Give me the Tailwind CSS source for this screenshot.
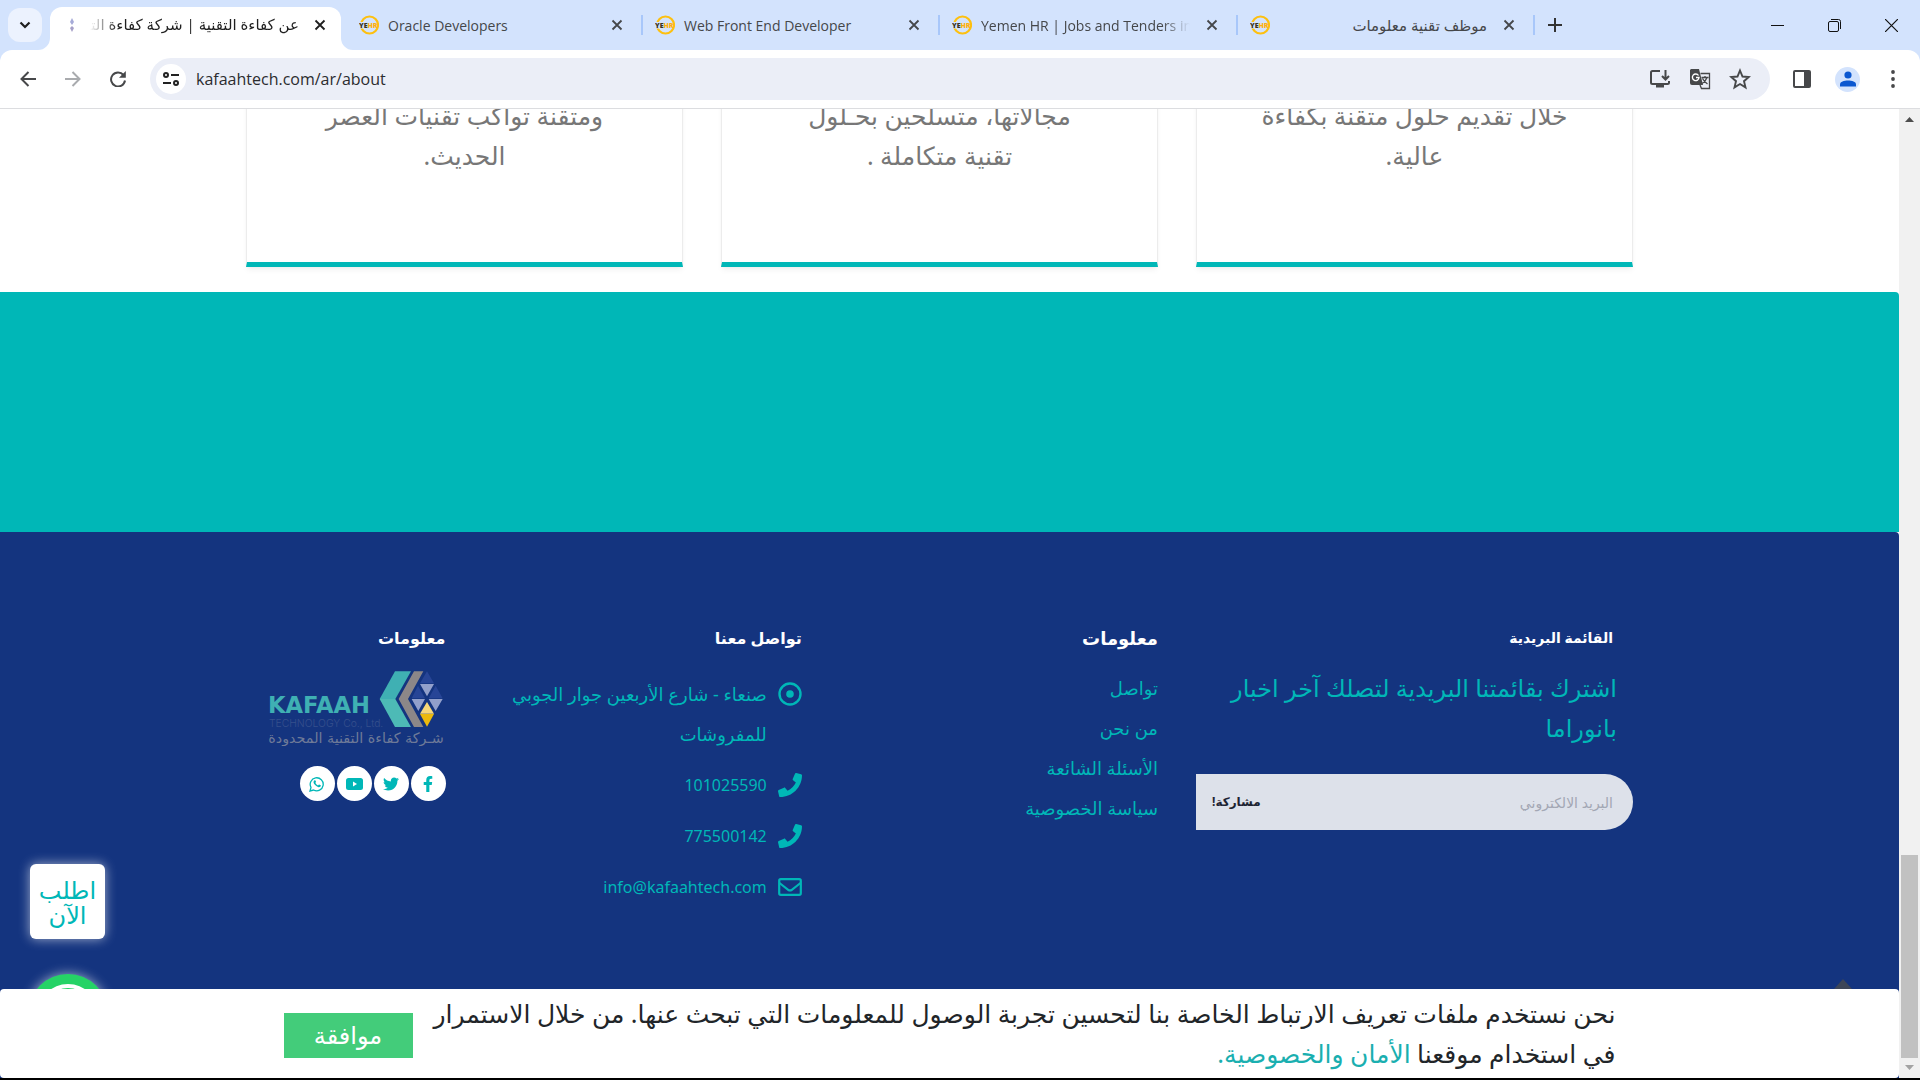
<!DOCTYPE html>
<html lang="ar">
<head>
<meta charset="utf-8">
<title>عن كفاءة التقنية | شركة كفاءة التقنية</title>
<script src="https://cdn.jsdelivr.net/npm/@tailwindcss/browser@4"></script>
</head>
<body class="flex h-screen flex-col overflow-hidden bg-black pb-0.5 font-['Open_Sans','DejaVu_Sans',sans-serif]">
<svg class="hidden">
  <symbol id="x" viewBox="0 0 12 12"><path d="M1.500 1.500l9 9M10.500 1.500l-9 9" stroke="currentColor" stroke-width="1.800" fill="none"/></symbol>
  <symbol id="yehr" viewBox="0 0 20 20"><circle cx="10.500" cy="10" r="8.500" fill="none" stroke="#fdc010" stroke-width="2.200"/><rect x="0" y="7" width="9" height="6.500" fill="#d3e3fd"/><text x="0" y="12.800" font-family="Open Sans" font-weight="800" font-size="7" fill="#3a3320">YE<tspan fill="#fdb010">HR</tspan></text></symbol>
  <symbol id="phone" viewBox="0 0 512 512"><path fill="currentColor" d="M493.400 24.600l-104-24c-11.300-2.600-22.900 3.300-27.500 13.900l-48 112c-4.200 9.800-1.400 21.300 6.900 28l60.600 49.600c-36 76.700-98.900 140.500-177.200 177.200l-49.600-60.600c-6.800-8.300-18.200-11.100-28-6.900l-112 48C3.900 366.500-2 378.100.600 389.400l24 104C27.100 504.200 36.700 512 48 512c256.100 0 464-207.500 464-464 0-11.200-7.700-20.900-18.600-23.400z"/></symbol>
</svg>

<!-- tab strip -->
<header class="shrink-0 bg-[#d3e3fd]" dir="ltr">
  <div class="flex h-[50px] items-center text-[14px] text-[#45474a]">
    <button class="ml-2 flex size-[34px] items-center justify-center rounded-xl bg-[#ecf2fe]" aria-label="Search tabs"><svg class="size-3" viewBox="0 0 12 12"><path d="M1.500 3.500L6 8l4.500-4.500" fill="none" stroke="#1f1f1f" stroke-width="2.200"/></svg></button>
    <div class="relative ml-2 flex h-[43px] w-[291px] items-center self-end rounded-t-xl bg-white pb-2 text-[#1f1f1f]">
      <svg class="absolute bottom-0 -left-3 size-3" viewBox="0 0 12 12"><path d="M12 0v12H0A12 12 0 0 0 12 0z" fill="#fff"/></svg>
      <svg class="absolute -right-3 bottom-0 size-3" viewBox="0 0 12 12"><path d="M0 0v12h12A12 12 0 0 1 0 0z" fill="#fff"/></svg>
      <svg class="ml-4 h-4 w-3 shrink-0" viewBox="0 0 12 16"><path d="M6 1l2 4-2 3-2-3z" fill="#a6abd8"/><path d="M6 9l2 2-2 4-2-4z" fill="#a6a0c8"/></svg>
      <span class="ml-3 flex-1 overflow-hidden whitespace-nowrap text-[15px] [mask-image:linear-gradient(to_right,transparent,black_28px)]" dir="rtl">عن كفاءة التقنية | شركة كفاءة التقنية</span>
      <button class="mx-[15px]" aria-label="Close"><svg class="size-3"><use href="#x"/></svg></button>
    </div>
    <div class="ml-1 flex w-[298px] items-center pl-3.5"><svg class="size-5"><use href="#yehr"/></svg><span class="ml-[9px] flex-1 whitespace-nowrap">Oracle Developers</span><button class="mr-[18px]" aria-label="Close"><svg class="size-3"><use href="#x"/></svg></button><i class="h-5 w-0.5 bg-[#a8c7fa]"></i></div>
    <div class="flex w-[297px] items-center pl-3"><svg class="size-5"><use href="#yehr"/></svg><span class="ml-[9px] flex-1 whitespace-nowrap">Web Front End Developer</span><button class="mr-[18px]" aria-label="Close"><svg class="size-3"><use href="#x"/></svg></button><i class="h-5 w-0.5 bg-[#a8c7fa]"></i></div>
    <div class="flex w-[298px] items-center pl-3"><svg class="size-5"><use href="#yehr"/></svg><span class="mr-4 ml-[9px] flex-1 overflow-hidden whitespace-nowrap [mask-image:linear-gradient(to_left,transparent,black_28px)]">Yemen HR | Jobs and Tenders in Yemen</span><button class="mr-[18px]" aria-label="Close"><svg class="size-3"><use href="#x"/></svg></button><i class="h-5 w-0.5 bg-[#a8c7fa]"></i></div>
    <div class="flex w-[297px] items-center pl-3"><svg class="size-5"><use href="#yehr"/></svg><span class="mr-4 ml-[9px] flex-1 whitespace-nowrap text-[15px]" dir="rtl">موظف تقنية معلومات</span><button class="mr-[18px]" aria-label="Close"><svg class="size-3"><use href="#x"/></svg></button><i class="h-5 w-0.5 bg-[#a8c7fa]"></i></div>
    <button class="ml-[13px]" aria-label="New tab"><svg class="size-3.5" viewBox="0 0 14 14"><path d="M7 0v14M0 7h14" stroke="#333" stroke-width="2"/></svg></button>
    <div class="mr-[22px] ml-auto flex gap-11 text-[#111]">
      <button aria-label="Minimize"><svg class="size-[13px]" viewBox="0 0 13 13"><path d="M0 6.500h13" stroke="currentColor"/></svg></button>
      <button aria-label="Restore"><svg class="size-[13px]" viewBox="0 0 13 13"><g fill="none" stroke="currentColor"><rect x=".5" y="2.500" width="10" height="10" rx="1.500"/><path d="M3 .5h7.500a2 2 0 0 1 2 2V10"/></g></svg></button>
      <button aria-label="Close window"><svg class="size-[13px]" viewBox="0 0 13 13"><path d="M0 0l13 13M13 0L0 13" stroke="currentColor" stroke-width="1.200"/></svg></button>
    </div>
  </div>
  <!-- toolbar -->
  <div class="flex h-[59px] items-center rounded-t-xl border-b border-[#dcdde0] bg-white text-[#47484a]">
    <button class="ml-5" aria-label="Back"><svg class="size-4" viewBox="0 0 16 16"><path d="M16 8H1.500M8.500 1L1.500 8l7 7" fill="none" stroke="currentColor" stroke-width="2"/></svg></button>
    <button class="ml-[29px] text-[#a9abae]" aria-label="Forward"><svg class="size-4" viewBox="0 0 16 16"><path d="M0 8h14.500M7.500 1l7 7-7 7" fill="none" stroke="currentColor" stroke-width="2"/></svg></button>
    <button class="ml-[29px]" aria-label="Reload"><svg class="size-4" viewBox="0 0 16 16"><path d="M13.500 4A7 7 0 1 0 15 9.500" fill="none" stroke="currentColor" stroke-width="2"/><path d="M15.800 0v6.800H9z" fill="currentColor"/></svg></button>
    <div class="ml-6 flex h-[42px] flex-1 items-center rounded-full bg-[#ebeef7] pr-[19px] pl-1.5">
      <button class="flex size-[30px] items-center justify-center rounded-full bg-white" aria-label="Site information"><svg class="size-4" viewBox="0 0 16 16"><g fill="none" stroke="#222" stroke-width="2"><circle cx="3" cy="4" r="2"/><path d="M8 4h8M0 12h8"/><circle cx="13" cy="12" r="2"/></g></svg></button>
      <input class="ml-2.5 min-w-0 flex-1 bg-transparent text-[16px] text-[#2b2c2f] outline-none" aria-label="Address" value="kafaahtech.com/ar/about">
      <div class="flex items-center gap-[18px]">
        <button aria-label="Install"><svg class="size-[22px]" viewBox="0 0 22 22"><path d="M11 3H3.500A1.500 1.500 0 0 0 2 4.500v10A1.500 1.500 0 0 0 3.500 16h15a1.500 1.500 0 0 0 1.500-1.500V13M16.500 2v9M13 8l3.500 3.500L20 8" fill="none" stroke="currentColor" stroke-width="2"/><path d="M7 16h8v3.500H7z" fill="currentColor"/></svg></button>
        <button aria-label="Translate"><svg class="size-[22px]" viewBox="0 0 22 22"><path d="M2 1h8l4 16H3a2 2 0 0 1-2-2V2z" fill="currentColor"/><path d="M9.500 7.500A3.300 3.300 0 1 0 10 9.500H7" fill="none" stroke="#fff" stroke-width="1.400"/><path d="M11.500 5.500h9v15h-8l-1.500-3.500M12.500 9.500h7M16 8v1.500M18 9.500c-1 3-3 5-5 6M13.500 10.500c1 2 3 4 5 5.500" fill="none" stroke="currentColor" stroke-width="1.300"/></svg></button>
        <button aria-label="Bookmark"><svg class="size-[22px]" viewBox="0 0 22 22"><path d="M11 2.500l2.500 6 6.300.5-4.800 4.200 1.500 6.200L11 16l-5.500 3.400L7 13.200 2.200 9l6.300-.5z" fill="none" stroke="currentColor" stroke-width="1.900"/></svg></button>
      </div>
    </div>
    <button class="ml-[22px]" aria-label="Side panel"><svg class="size-5" viewBox="0 0 20 20"><rect x="2" y="2" width="16" height="16" rx="1" fill="none" stroke="currentColor" stroke-width="2"/><path d="M12 2h6v16h-6z" fill="currentColor"/></svg></button>
    <button class="ml-[23px] flex size-[25px] items-center justify-center rounded-full bg-[#d3e3fd]" aria-label="Profile"><svg class="size-4" viewBox="0 0 16 16"><circle cx="8" cy="4" r="3.600" fill="#0b57d0"/><path d="M0 15.500v-2C0 10.500 4 9.500 8 9.500s8 1 8 4v2z" fill="#0b57d0"/></svg></button>
    <button class="mr-[17px] ml-[23px]" aria-label="Menu"><svg class="size-5" viewBox="0 0 20 20"><g fill="currentColor"><circle cx="10" cy="3" r="1.900"/><circle cx="10" cy="10" r="1.900"/><circle cx="10" cy="17" r="1.900"/></g></svg></button>
  </div>
</header>

<div class="flex min-h-0 flex-1 bg-white" dir="ltr">
  <div class="relative flex min-w-0 flex-1 flex-col overflow-hidden font-['Noto_Sans','DejaVu_Sans',sans-serif]" dir="rtl">
    <!-- cards, scrolled partly out of view -->
    <main class="shrink-0 pr-5">
      <div class="mx-auto -mt-3.5 grid max-w-[1387px] grid-cols-3 gap-[38px] text-center text-[25px] leading-10 text-[#777]">
        <article class="h-[172px] border-x border-b-[5px] border-x-[#ececec] border-b-[#00b7b7] shadow-md shadow-black/5"><p><span class="block">خلال تقديم حلول متقنة بكفاءة</span><span class="block">عالية.</span></p></article>
        <article class="h-[172px] border-x border-b-[5px] border-x-[#ececec] border-b-[#00b7b7] shadow-md shadow-black/5"><p><span class="block">مجالاتها، متسلحين بحـلول</span><span class="block">تقنية متكاملة .</span></p></article>
        <article class="h-[172px] border-x border-b-[5px] border-x-[#ececec] border-b-[#00b7b7] shadow-md shadow-black/5"><p><span class="block">ومتقنة تواكب تقنيات العصر</span><span class="block">الحديث.</span></p></article>
      </div>
    </main>
    <section class="mt-[25px] h-60 shrink-0 rounded-tr bg-[#00b7b7]"></section>

    <footer class="flex-1 rounded-tr bg-[#14347f] pt-[88px] pr-5 text-[#00b7b7]">
      <div class="mx-auto grid max-w-[1387px] grid-cols-12 gap-x-[38px]">
        <section class="col-span-4">
          <h3 class="pr-5 text-[14px] leading-9 font-bold text-white">القائمة البريدية</h3>
          <p class="mt-3 pr-4 text-[24px] leading-10 whitespace-nowrap"><span class="block">اشترك بقائمتنا البريدية لتصلك آخر اخبار</span><span class="block">بانوراما</span></p>
          <form class="mt-[26px] flex h-14 items-center rounded-r-full bg-[#dde1ea] pr-5 pl-4">
            <input type="email" class="min-w-0 flex-1 bg-transparent text-[14px] outline-none placeholder:text-[#a3a7b4]" aria-label="البريد الالكتروني" placeholder="البريد الالكتروني">
            <button type="button" class="text-[12px] font-bold text-[#1d2433]">مشاركة!</button>
          </form>
        </section>
        <nav class="col-span-3">
          <h3 class="text-[18px] leading-9 font-bold text-white">معلومات</h3>
          <ul class="mt-3 text-[18px] leading-10">
            <li><a href="#">تواصل</a></li><li><a href="#">من نحن</a></li><li><a href="#">الأسئلة الشائعة</a></li><li><a href="#">سياسة الخصوصية</a></li>
          </ul>
        </nav>
        <section class="col-span-3">
          <h3 class="text-[16px] leading-9 font-bold text-white">تواصل معنا</h3>
          <ul class="mt-[18px] flex flex-col gap-[11px] text-[16px] leading-10 whitespace-nowrap">
            <li class="flex gap-[11px]"><svg class="mt-2 size-6 shrink-0" viewBox="0 0 24 24"><circle cx="12" cy="12" r="10.500" fill="none" stroke="currentColor" stroke-width="2.400"/><circle cx="12" cy="12" r="3.800" fill="currentColor"/></svg><span class="text-[18px]"><span class="block">صنعاء - شارع الأربعين جوار الجوبي</span><span class="block">للمفروشات</span></span></li>
            <li class="flex gap-[11px]"><svg class="mt-2 size-6 shrink-0"><use href="#phone"/></svg><a href="#">101025590</a></li>
            <li class="flex gap-[11px]"><svg class="mt-2 size-6 shrink-0"><use href="#phone"/></svg><a href="#">775500142</a></li>
            <li class="flex gap-[11px]"><svg class="mt-2 size-6 shrink-0" viewBox="0 0 24 24"><rect x="1.200" y="4.200" width="21.600" height="15.600" rx="1.500" fill="none" stroke="currentColor" stroke-width="2.200"/><path d="M1.500 8l9 7q1.500 1 3 0l9-7" fill="none" stroke="currentColor" stroke-width="2.200"/></svg><a href="#">info@kafaahtech.com</a></li>
          </ul>
        </section>
        <section class="col-span-2">
          <h3 class="text-[16px] leading-9 font-bold text-white">معلومات</h3>
          <svg class="mt-3.5 mr-0.5 h-[76px] w-[176px]" viewBox="82 180 528 228" direction="ltr">
            <path d="M463 184h48l-47 83h-47z" fill="#3fb0b3"/><path d="M417 267h47l47 84h-48z" fill="#4dbab6"/>
            <path d="M520 184h28l-46 83 46 84h-28l-46-84z" fill="#8c8788"/>
            <path d="M559 184l21 36h-42zM532 227l21 38h-40zM585 227l21 38h-42z" fill="#274596"/>
            <path d="M538 222h42l-21 37zM513 267h40l-20 36zM564 267h42l-21 36z" fill="#92a0cb"/>
            <path d="M559 276l21 35h-42z" fill="#f6d778"/><path d="M538 312h42l-21 38z" fill="#ebb90c"/>
            <text x="82" y="310" font-family="DejaVu Sans" font-weight="bold" font-size="68" fill="#3fb0b3">KAFAAH</text>
            <text x="85" y="350" font-family="Inter" font-weight="300" font-size="31" fill="#36508d">TECHNOLOGY Co., Ltd.</text>
            <text x="346" y="400" text-anchor="middle" font-family="DejaVu Sans" font-size="43" fill="#6e7a98">شـركة كفاءة التقنية المحدودة</text>
          </svg>
          <div class="mt-5 flex gap-0.5">
            <a href="#" aria-label="Facebook" class="flex size-[35px] items-center justify-center rounded-full bg-white"><svg class="size-4" viewBox="0 0 320 512"><path fill="currentColor" d="M279.100 288l14.300-92.700h-88.900v-60.100c0-25.400 12.400-50.100 52.200-50.100h40.500V6.300S260.400 0 225.400 0c-73.200 0-121.100 44.400-121.100 124.700v70.600H22.900V288h81.400v224h100.200V288z"/></svg></a>
            <a href="#" aria-label="Twitter" class="flex size-[35px] items-center justify-center rounded-full bg-white"><svg class="size-4" viewBox="0 0 512 512"><path fill="currentColor" d="M459.400 151.700c.3 4.500.3 9.100.3 13.600 0 138.700-105.600 298.600-298.600 298.600-59.500 0-114.700-17.200-161.100-47.100 8.400 1 16.600 1.300 25.300 1.300 49.100 0 94.200-16.600 130.300-44.800-46.100-1-84.800-31.200-98.100-72.800 6.500 1 13 1.600 19.800 1.600 9.400 0 18.800-1.300 27.600-3.600-48.100-9.700-84.100-52-84.100-103v-1.300c14 7.800 30.200 12.700 47.400 13.300-28.300-18.800-46.800-51-46.800-87.400 0-19.500 5.200-37.400 14.300-53 51.700 63.700 129.300 105.300 216.400 109.800-1.600-7.800-2.600-15.900-2.600-24 0-57.800 46.800-104.900 104.900-104.900 30.200 0 57.500 12.700 76.700 33.100 23.700-4.500 46.500-13.300 66.600-25.300-7.800 24.400-24.400 44.800-46.100 57.800 21.100-2.300 41.600-8.100 60.400-16.200-14.300 20.800-32.200 39.300-52.600 54.300z"/></svg></a>
            <a href="#" aria-label="YouTube" class="flex size-[35px] items-center justify-center rounded-full bg-white"><svg class="h-3 w-[17px]" viewBox="0 0 17 12"><rect width="17" height="12" rx="2.500" fill="currentColor"/><path d="M7 3.500v5l4-2.500z" fill="#fff"/></svg></a>
            <a href="#" aria-label="WhatsApp" class="flex size-[35px] items-center justify-center rounded-full bg-white"><svg class="size-4" viewBox="0 0 16 16"><path d="M1 15l1-3.600A6.500 6.500 0 1 1 4.600 14z" fill="none" stroke="currentColor" stroke-width="1.300"/><path d="M5.500 4.300c1-.6 1.300.6 1.500 1.500L6.400 7c.6 1.200 1.500 2 2.600 2.400l1-1 1.800.9c.1 1.600-1.200 2.100-2.300 1.900C7 10.600 4.700 8 4.500 6.300c0-.9.400-1.600 1-2z" fill="currentColor"/></svg></a>
          </div>
        </section>
      </div>
    </footer>

    <!-- floating controls -->
    <button class="absolute bottom-[139px] left-[30px] size-[75px] rounded-md bg-white text-[24px] leading-[25px] text-[#00b7b7] shadow-[0_0_12px_rgba(255,255,255,.6)]">اطلب الآن</button>
    <a href="#" aria-label="WhatsApp" class="absolute bottom-6 left-7 size-20 rounded-full bg-[#25d366] p-2.5 shadow-[0_0_12px_rgba(255,255,255,.6)]"><span class="block size-full rounded-full border-4 border-white bg-[#25d366]"></span></a>
    <svg class="absolute right-[47px] bottom-[89px] h-2.5 w-[18px]" viewBox="0 0 18 10"><path d="M9 0l9 10H0z" fill="#3d4658"/></svg>

    <!-- cookie notice -->
    <aside class="absolute inset-x-0 bottom-0 rounded bg-white pt-1 pb-[5px]">
      <div class="mx-auto flex max-w-[1332px] items-center justify-between">
        <p class="text-[25px] leading-10 whitespace-nowrap text-[#212529]"><span class="block">نحن نستخدم ملفات تعريف الارتباط الخاصة بنا لتحسين تجربة الوصول للمعلومات التي تبحث عنها. من خلال الاستمرار</span><span class="block">في استخدام موقعنا <a href="#" class="text-[#1aafb0]">الأمان والخصوصية.</a></span></p>
        <button class="mt-1 h-[45px] w-[129px] bg-[#43cc7a] text-[24px] leading-none text-white">موافقة</button>
      </div>
    </aside>
  </div>

  <!-- scrollbar -->
  <div class="flex w-[21px] shrink-0 flex-col items-center bg-[#f1f1f1] py-2" aria-hidden="true">
    <svg class="h-[5px] w-[9px] shrink-0" viewBox="0 0 9 5"><path d="M0 5l4.500-5L9 5z" fill="#4d4d4d"/></svg>
    <div class="mt-auto h-[203px] w-[17px] bg-[#c1c1c1]"></div>
    <svg class="mt-[7px] h-[5px] w-[9px] shrink-0" viewBox="0 0 9 5"><path d="M0 0l4.500 5L9 0z" fill="#a3a3a3"/></svg>
  </div>
</div>
</body>
</html>
